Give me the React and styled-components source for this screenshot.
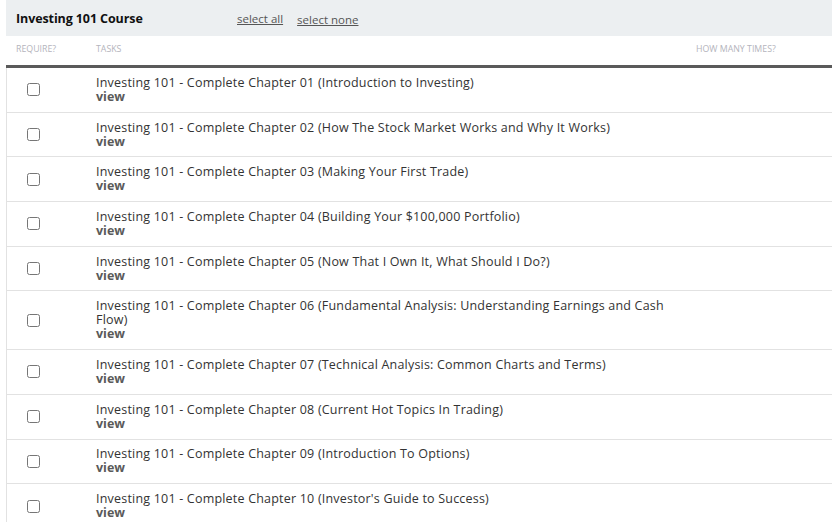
import React from 'react';
import styled, { createGlobalStyle } from 'styled-components';

const GlobalStyle = createGlobalStyle`
  body {
    margin: 0;
    background: #fff;
    font-family: "Open Sans", "Liberation Sans", sans-serif;
    color: #333;
  }
`;

const chapters = [
  'Introduction to Investing',
  'How The Stock Market Works and Why It Works',
  'Making Your First Trade',
  'Building Your $100,000 Portfolio',
  'Now That I Own It, What Should I Do?',
  'Fundamental Analysis: Understanding Earnings and Cash Flow',
  'Technical Analysis: Common Charts and Terms',
  'Current Hot Topics In Trading',
  'Introduction To Options',
  "Investor's Guide to Success",
];

const Page = styled.div`
  margin-left: 6px;
  width: 826px;
  overflow: hidden;
`;

const TopBar = styled.div`
  display: flex;
  align-items: center;
  height: 36px;
  padding-left: 10px;
  background: #eceff1;
`;

const Title = styled.h3`
  margin: 0;
  width: 221px;
  font-size: 12.5px;
  font-weight: 700;
  color: #111;
  letter-spacing: -0.1px;
`;

const SelectLink = styled.a`
  font-size: 11.5px;
  color: #555;
  text-decoration: underline;
  margin-right: 14px;
  margin-top: ${({ $low }) => ($low ? '2px' : '0')};
  cursor: pointer;
`;

const Grid = styled.div`
  display: grid;
  grid-template-columns: 90px 600px 1fr;
`;

const HeadCell = styled.div`
  height: 26px;
  padding-bottom: 3px;
  display: flex;
  align-items: center;
  padding-left: ${({ $pad }) => $pad || 0}px;
  font-size: 8.8px;
  text-transform: uppercase;
  color: #b4b4bc;
  border-bottom: 3px solid #5a5a5a;
`;

const Cell = styled.div`
  display: flex;
  align-items: center;
  border-bottom: 1px solid #e2e2e2;
  border-left: ${({ $first }) => ($first ? '1px solid #e2e2e2' : 'none')};
`;

const Check = styled.input.attrs({ type: 'checkbox' })`
  margin: 0 0 0 20px;
  width: 13px;
  height: 13px;
`;

const Task = styled.div`
  width: 585px;
  font-size: 12.5px;
  line-height: 14px;
  letter-spacing: 0.2px;
  color: #333;
  padding: 7.85px 0;
`;

const View = styled.a`
  display: block;
  font-weight: 700;
  color: #5a5a5a;
  letter-spacing: 0;
`;

const App = () => {
  return (
    <Page>
      <GlobalStyle />
      <TopBar>
        <Title>Investing 101 Course</Title>
        <SelectLink>select all</SelectLink>
        <SelectLink $low>select none</SelectLink>
      </TopBar>

      <Grid>
        <HeadCell $pad={10}>Require?</HeadCell>
        <HeadCell>Tasks</HeadCell>
        <HeadCell>How many times?</HeadCell>

        {chapters.map((name, i) => (
          <React.Fragment key={i}>
            <Cell $first>
              <Check />
            </Cell>
            <Cell>
              <Task>
                Investing 101 - Complete Chapter {String(i + 1).padStart(2, '0')} ({name})
                <View>view</View>
              </Task>
            </Cell>
            <Cell />
          </React.Fragment>
        ))}
      </Grid>
    </Page>
  );
};

export default App;
